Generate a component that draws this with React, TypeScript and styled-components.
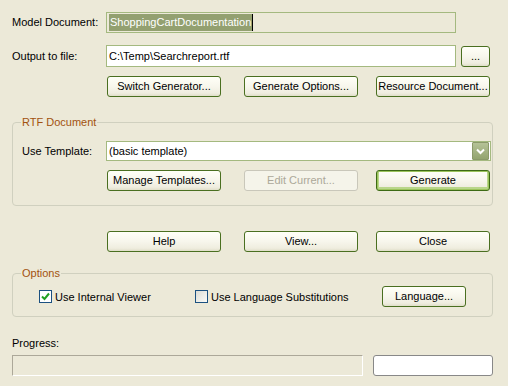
import React from "react";
import styled, { createGlobalStyle, css } from "styled-components";

const GlobalStyle = createGlobalStyle`
  html, body {
    margin: 0;
    padding: 0;
    background: #ece9d8;
  }
  body {
    font-family: "Liberation Sans", Arial, sans-serif;
    font-size: 11px;
    color: #000;
  }
`;

const Dialog = styled.div`
  width: 508px;
  height: 386px;
  box-sizing: border-box;
  padding: 12px 15px 0 12px;
  background: #ece9d8;
  display: flex;
  flex-direction: column;
  overflow: hidden;
`;

const FieldRow = styled.div<{ $top: number; $h: number }>`
  display: flex;
  align-items: center;
  margin-top: ${(p) => p.$top}px;
  height: ${(p) => p.$h}px;
`;

const Label = styled.div<{ $w: number }>`
  width: ${(p) => p.$w}px;
  flex-shrink: 0;
  line-height: 13px;
`;

const TextBox = styled.div<{ $readOnly?: boolean; $w: number }>`
  box-sizing: border-box;
  width: ${(p) => p.$w}px;
  height: 100%;
  border: 1px solid #a4b97f;
  background: ${(p) => (p.$readOnly ? "#ece9d8" : "#fff")};
  display: flex;
  align-items: center;
  padding-left: 2px;
  white-space: nowrap;
`;

const Selected = styled.span`
  background: #93a070;
  color: #fff;
  line-height: 17px;
  padding: 0 1px;
  border-right: 1px solid #000;
`;

const Button = styled.button<{ $w?: number; $default?: boolean }>`
  box-sizing: border-box;
  width: ${(p) => p.$w ?? 114}px;
  height: 21px;
  padding: 0;
  border: 1px solid #4a6f20;
  border-radius: 3px;
  background: linear-gradient(#fffff7 0%, #f7f6ec 50%, #efeddf 85%, #e0dec9 100%);
  font-family: "Liberation Sans", Arial, sans-serif;
  font-size: 11px;
  color: #000;
  line-height: 13px;
  ${(p) =>
    p.$default &&
    css`
      border-color: #3d6a14;
      box-shadow: inset 0 0 0 1px #9cc45c, inset 0 -1px 0 2px #b9d68a;
    `}
  &:disabled {
    border-color: #c9c7ba;
    background: #f5f4ea;
    color: #aca899;
  }
`;

const ButtonGrid = styled.div<{ $top: number; $indent: number }>`
  display: grid;
  grid-template-columns: 137px 132px 114px;
  margin-top: ${(p) => p.$top}px;
  margin-left: ${(p) => p.$indent}px;
`;

const Group = styled.fieldset<{ $top: number; $pt: number; $pb: number }>`
  margin: ${(p) => p.$top}px 0 0 0;
  width: 481px;
  box-sizing: border-box;
  border: 1px solid #d0d0bf;
  border-radius: 4px;
  padding: ${(p) => p.$pt}px 1px ${(p) => p.$pb}px 9px;
`;

const Legend = styled.legend`
  color: #a2520f;
  padding: 0 1px;
  margin-left: -1px;
  line-height: 13px;
  font-size: 11px;
`;

const Combo = styled.div`
  box-sizing: border-box;
  width: 385px;
  height: 20px;
  border: 1px solid #a4b97f;
  background: #fff;
  display: flex;
  align-items: center;
  justify-content: space-between;
  padding: 1px 1px 1px 2px;
`;

const ComboArrow = styled.div`
  width: 15px;
  height: 16px;
  border: 1px solid #8b9a6a;
  border-radius: 1px;
  background: linear-gradient(#b5c297, #93a46f);
  display: flex;
  align-items: center;
  justify-content: center;
  box-sizing: content-box;
`;

const OptionsRow = styled.div`
  display: grid;
  grid-template-columns: 156px 187px 84px;
  align-items: center;
  margin-left: 17px;
  height: 21px;
`;

const CheckItem = styled.label`
  display: flex;
  align-items: center;
  gap: 3px;
`;

const CheckBox = styled.span<{ $checked?: boolean }>`
  width: 11px;
  height: 11px;
  border: 1px solid #1c5180;
  background: ${(p) =>
    p.$checked ? "#fff" : "linear-gradient(135deg, #dcdcd4, #fbfbf8)"};
  display: flex;
  align-items: center;
  justify-content: center;
`;

const ProgressLabel = styled.div`
  margin-top: 20px;
  line-height: 13px;
`;

const ProgressRow = styled.div`
  display: flex;
  gap: 10px;
  margin-top: 5px;
  height: 21px;
`;

const ProgressBar = styled.div`
  box-sizing: border-box;
  width: 351px;
  height: 100%;
  border: 1px solid;
  border-color: #aca899 #fff #fff #aca899;
`;

const StatusBox = styled.div`
  box-sizing: border-box;
  width: 120px;
  height: 100%;
  border: 1px solid #888;
  border-radius: 3px;
  background: #fff;
`;

export default function App() {
  return (
    <>
      <GlobalStyle />
      <Dialog>
        <FieldRow $top={0} $h={21}>
          <Label $w={94}>Model Document:</Label>
          <TextBox $readOnly $w={350}>
            <Selected>ShoppingCartDocumentation</Selected>
          </TextBox>
        </FieldRow>

        <FieldRow $top={12} $h={22}>
          <Label $w={94}>Output to file:</Label>
          <TextBox $w={350}>C:\Temp\Searchreport.rtf</TextBox>
          <Button $w={29} style={{ marginLeft: 5 }}>...</Button>
        </FieldRow>

        <ButtonGrid $top={9} $indent={95}>
          <Button>Switch Generator...</Button>
          <Button>Generate Options...</Button>
          <Button>Resource Document...</Button>
        </ButtonGrid>

        <Group $top={19} $pt={12} $pb={14}>
          <Legend>RTF Document</Legend>
          <FieldRow $top={0} $h={20}>
            <Label $w={84}>Use Template:</Label>
            <Combo>
              <span>(basic template)</span>
              <ComboArrow>
                <svg width="9" height="7" viewBox="0 0 9 7">
                  <path d="M1 1.5 L4.5 5 L8 1.5" fill="none" stroke="#fff" strokeWidth="2" />
                </svg>
              </ComboArrow>
            </Combo>
          </FieldRow>
          <ButtonGrid $top={9} $indent={85}>
            <Button>Manage Templates...</Button>
            <Button disabled>Edit Current...</Button>
            <Button $default>Generate</Button>
          </ButtonGrid>
        </Group>

        <ButtonGrid $top={25} $indent={95}>
          <Button>Help</Button>
          <Button>View...</Button>
          <Button>Close</Button>
        </ButtonGrid>

        <Group $top={15} $pt={6} $pb={9}>
          <Legend>Options</Legend>
          <OptionsRow>
            <CheckItem>
              <CheckBox $checked>
                <svg width="9" height="9" viewBox="0 0 9 9">
                  <path d="M1 4.5 L3.5 7 L8 1.5" fill="none" stroke="#21a121" strokeWidth="2" />
                </svg>
              </CheckBox>
              Use Internal Viewer
            </CheckItem>
            <CheckItem>
              <CheckBox />
              Use Language Substitutions
            </CheckItem>
            <Button $w={84}>Language...</Button>
          </OptionsRow>
        </Group>

        <ProgressLabel>Progress:</ProgressLabel>
        <ProgressRow>
          <ProgressBar />
          <StatusBox />
        </ProgressRow>
      </Dialog>
    </>
  );
}
